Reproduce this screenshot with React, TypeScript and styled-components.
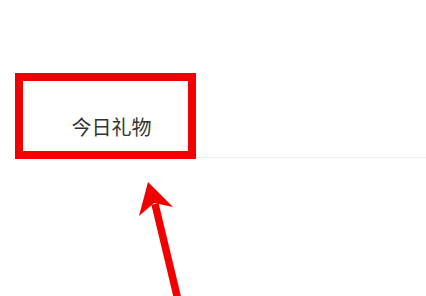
import React from "react";
import styled, { createGlobalStyle } from "styled-components";

const Global = createGlobalStyle`
  html, body { margin: 0; padding: 0; background: #ffffff; }
  body { width: 426px; height: 296px; overflow: hidden; font-family: "Noto Sans CJK SC", "Noto Sans", sans-serif; }
`;

const Page = styled.div`
  position: relative;
  width: 426px;
  height: 296px;
  background: #ffffff;
  padding-top: 73px;
  box-sizing: border-box;
`;

const TabBar = styled.div`
  display: flex;
  align-items: flex-end;
  padding-left: 15px;
`;

const Tab = styled.div<{ $highlight?: boolean }>`
  box-sizing: border-box;
  width: 181px;
  height: 86px;
  border: 8px solid ${(p) => (p.$highlight ? "#f20000" : "transparent")};
  display: flex;
  justify-content: center;
  align-items: flex-start;
  padding-top: 36px;
  padding-left: 12px;
  font-size: 20px;
  line-height: 20px;
  color: #333333;
`;

const Filler = styled.div`
  flex: 1;
  height: 1px;
  margin-bottom: 1px;
  background: #eeeeee;
`;

const ArrowLayer = styled.svg`
  position: absolute;
  left: 0;
  top: 0;
  pointer-events: none;
`;

export default function App() {
  return (
    <>
      <Global />
      <Page>
        <TabBar>
          <Tab $highlight>今日礼物</Tab>
          <Filler />
        </TabBar>
        <ArrowLayer width="426" height="296" viewBox="0 0 426 296">
          <line x1="155" y1="204" x2="178" y2="300" stroke="#f20000" strokeWidth="7.5" />
          <polygon points="148,182 139,216 154,203 173,207" fill="#f20000" />
        </ArrowLayer>
      </Page>
    </>
  );
}
